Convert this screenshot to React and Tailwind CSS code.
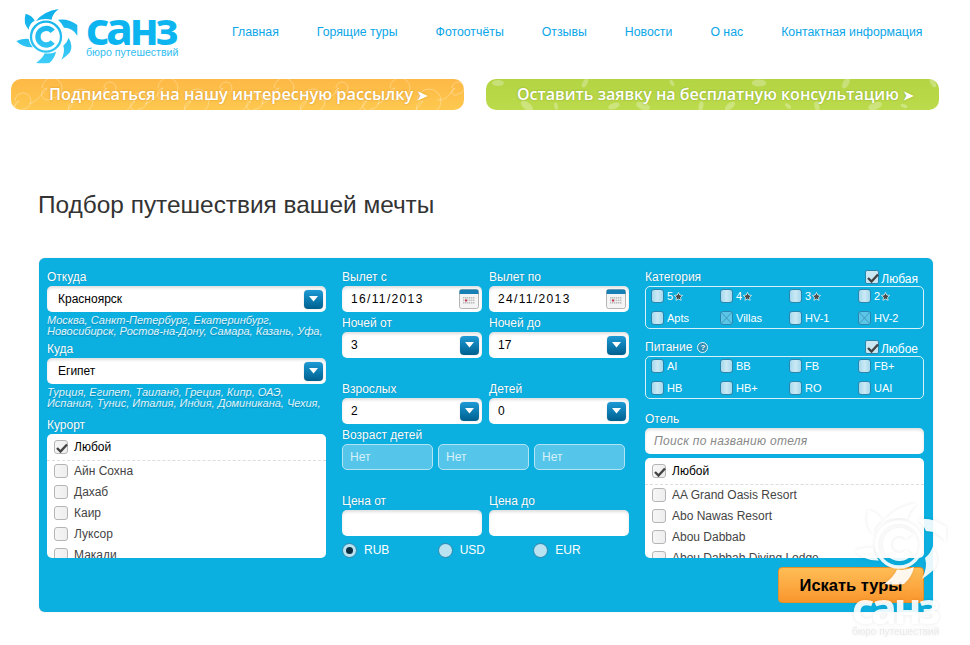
import React from "react";

const nav = ["Главная", "Горящие туры", "Фотоотчёты", "Отзывы", "Новости", "О нас", "Контактная информация"];

function Sun({ white, id, className }) {
  const blade = white ? "#ffffff" : `url(#${id})`;
  return (
    <svg viewBox="0 0 210 186" className={className}>
      <defs>
        <linearGradient id={id} gradientUnits="userSpaceOnUse" x1="0" y1="10" x2="0" y2="176">
          <stop offset="0" stopColor="#0aaeea" />
          <stop offset="1" stopColor="#3fcdf8" />
        </linearGradient>
      </defs>
      <g fill={blade}>
        <path d="M41 26 Q62 32 68 47 Q52 55 50 74 Q32 55 41 26Z" />
        <path d="M72 48 Q96 18 140 12 Q120 28 119 44 Q95 38 72 48Z" />
        <path d="M138 44 Q172 40 196 60 Q196 76 196 92 Q182 68 156 68 Q150 54 138 44Z" />
        <path d="M170 98 Q184 125 174 142 Q166 152 148 164 Q160 140 154 122 Q166 112 170 98Z" />
        <path d="M132 140 Q128 160 112 174 Q92 176 72 174 Q92 160 98 145 Q116 148 132 140Z" />
        <path d="M62 127 Q32 128 13 108 Q34 100 50 102 Q52 116 62 127Z" />
      </g>
      <circle cx="102" cy="95" r="45" fill="none" stroke={blade} strokeWidth="7" />
      <path d="M122 79 A25 25 0 1 0 122 111" fill="none" stroke={blade} strokeWidth="16" />
    </svg>
  );
}

function Swirls({ seed }) {
  const items = [];
  for (let i = 0; i < 16; i++) {
    const x = 12 + i * 29;
    const y = i % 2 ? 9 : 22;
    const r = 6 + ((i + seed) % 4) * 2;
    if (seed === 1) {
      items.push(
        <path
          key={i}
          d={`M${x - r} ${y} a${r} ${r} 0 1 1 ${r} ${r} a${r * 0.6} ${r * 0.6} 0 1 1 ${-r * 0.5} ${-r} q-10 14 -18 ${r + 6}`}
          fill="none"
          stroke="rgba(255,255,255,.3)"
          strokeWidth="1"
        />
      );
    } else {
      items.push(
        <ellipse
          key={i}
          cx={x}
          cy={i % 3 === 0 ? 4 : 27}
          rx={r * 0.6}
          ry={r * 0.3}
          transform={`rotate(${i * 40} ${x} ${i % 3 === 0 ? 4 : 27})`}
          fill="rgba(255,255,255,.28)"
        />
      );
    }
  }
  return (
    <svg viewBox="0 0 453 31" className="absolute inset-0 w-full h-full">
      {items}
    </svg>
  );
}

function Label({ children, className = "" }) {
  return (
    <div className={`h-[14px] text-[12px] leading-[14px] text-white [text-shadow:0_0_1px_rgba(0,60,90,.4)] ${className}`}>
      {children}
    </div>
  );
}

function Arrow() {
  return (
    <span className="w-[19px] h-[19px] rounded-[4px] bg-gradient-to-b from-[#1d9bd6] to-[#00608f] flex items-center justify-center shrink-0 shadow-[0_0_1px_rgba(0,0,0,.4)]">
      <svg width="9" height="6" viewBox="0 0 9 6">
        <path d="M0 0 H9 L4.5 5.5Z" fill="#fff" />
      </svg>
    </span>
  );
}

const box = "h-[26px] bg-white rounded-[5px] shadow-[inset_0_2px_3px_rgba(0,0,0,.13)] flex items-center text-[12px]";

function Select({ value, pl = "pl-[9px]" }) {
  return (
    <div className={`${box} ${pl} pr-[3px] justify-between mt-[2px] text-black`}>
      <span>{value}</span>
      <Arrow />
    </div>
  );
}

function Calendar() {
  return (
    <svg width="20" height="20" viewBox="0 0 20 20" className="shrink-0">
      <rect x="0.5" y="0.5" width="19" height="19" rx="2" fill="#f4f4f4" stroke="#b5b5b5" />
      <path d="M0.5 5 V2.5 a2 2 0 0 1 2-2 h15 a2 2 0 0 1 2 2 V5Z" fill="#1680b5" />
      <g fill="#bdbdbd">
        {[0, 1, 2, 3, 4, 5].map((c) =>
          [0, 1, 2].map((r) => <rect key={`${c}-${r}`} x={4 + c * 2} y={8 + r * 2.5} width="1.4" height="1.6" />)
        )}
      </g>
      <rect x="6" y="10.5" width="2" height="2" fill="#c8344a" />
    </svg>
  );
}

function DateBox({ value }) {
  return (
    <div className={`${box} pl-[9px] pr-[3px] justify-between mt-[2px] text-black tracking-[1.35px]`}>
      <span>{value}</span>
      <Calendar />
    </div>
  );
}

function Hints({ lines }) {
  return (
    <div className="mt-[3px] h-[22px] text-[11px] leading-[10.5px] italic text-[#e2f5fb] [text-shadow:0_1px_1px_rgba(0,70,110,.35)] whitespace-nowrap">
      {lines.map((l) => (
        <div key={l}>{l}</div>
      ))}
    </div>
  );
}

function Check() {
  return (
    <svg width="12" height="10" viewBox="0 0 12 10" className="absolute left-[1px] top-[2px]">
      <path d="M1 5 L4.5 8.5 L11 1.5" fill="none" stroke="#444" strokeWidth="2.4" />
    </svg>
  );
}

function ListBox({ checked }) {
  return (
    <span className="relative w-[14px] h-[14px] shrink-0 rounded-[3px] border border-[#b5b5b5] bg-gradient-to-r from-[#f6f6f6] to-[#eeeeee]">
      {checked && <Check />}
    </span>
  );
}

function Row({ text }) {
  return (
    <div className="h-[21px] flex items-center gap-[6px] pl-[7px] text-[12px] shrink-0 text-[#444]">
      <ListBox />
      <span className="whitespace-nowrap">{text}</span>
    </div>
  );
}

function List({ items, height }) {
  return (
    <div className={`bg-white rounded-[5px] overflow-hidden flex flex-col ${height}`}>
      <div className="h-[27px] shrink-0 mb-[-1px] border-b border-dashed border-[#dddddd] flex items-center gap-[6px] pl-[7px] text-[12px] text-black">
        <ListBox checked />
        <span>Любой</span>
      </div>
      {items.map((t) => (
        <Row key={t} text={t} />
      ))}
    </div>
  );
}

function Opt({ label, star, crossed }) {
  return (
    <div className="flex items-center gap-[3px] text-[11px] text-white">
      <span
        className={`relative w-[13px] h-[14px] rounded-[3px] border border-[#2b86ad] overflow-hidden shrink-0 ${
          crossed ? "bg-[#5cc6e9]" : "bg-gradient-to-r from-[#a5d8ec] via-[#cbe9f4] to-[#a5d8ec]"
        }`}
      >
        {crossed && (
          <svg viewBox="0 0 13 14" className="absolute inset-0 w-full h-full">
            <path d="M0 0 L13 14 M13 0 L0 14" stroke="#3a91b5" strokeWidth="1" />
          </svg>
        )}
      </span>
      <span>{label}</span>
      {star && (
        <svg width="9" height="9" viewBox="0 0 24 24" className="-ml-[2px]">
          <path
            d="M12 1 L15.4 8.2 L23 9.2 L17.4 14.6 L18.9 22.4 L12 18.6 L5.1 22.4 L6.6 14.6 L1 9.2 L8.6 8.2Z"
            fill="#4a4a4a"
            stroke="#dff"
            strokeWidth="2"
          />
        </svg>
      )}
    </div>
  );
}

function OptGrid({ items }) {
  return (
    <div className="h-[43px] mt-[2px] rounded-[5px] border border-[#d5f1fa] pl-[5px] grid grid-cols-[69px_69px_69px_69px] grid-rows-[18px_26px]">
      {items}
    </div>
  );
}

function AnyBox({ text, className = "" }) {
  return (
    <div className={`h-[14px] flex items-start gap-[2px] text-[12px] text-white ${className}`}>
      <span className="relative w-[14px] h-[14px] rounded-[2px] border border-[#2b86ad] bg-[#c9e8f4]">
        <Check />
      </span>
      <span className="mt-[2px] leading-[14px]">{text}</span>
    </div>
  );
}

function Radio({ label, on }) {
  return (
    <div className="w-[96px] flex items-center gap-[7px] text-[12px] text-white">
      <span className="w-[15px] h-[15px] rounded-full border border-[#2a86ab] bg-[#b9e3f1] flex items-center justify-center">
        {on && <span className="w-[7px] h-[7px] rounded-full bg-[#0b2f42]" />}
      </span>
      <span>{label}</span>
    </div>
  );
}

export default function App() {
  return (
    <div
      className="relative w-[970px] h-[645px] overflow-hidden bg-white"
      style={{ fontFamily: '"Liberation Sans", Arial, sans-serif' }}
    >
      <header className="h-[79px] flex items-start">
        <div className="ml-[12px] mt-[5px] flex">
          <Sun id="logoGrad" className="w-[70px] h-[62px] shrink-0" />
          <div className="ml-[4px] w-[94px] mt-[4px] text-[#0db5f0]">
            <div
              className="h-[38px] text-[45px] leading-[38px] font-bold tracking-[-3.5px] whitespace-nowrap"
              style={{ fontFamily: '"Noto Sans", sans-serif' }}
            >
              санз
            </div>
            <div className="text-[10.6px] leading-[11px] text-[#31bdf0] whitespace-nowrap">бюро путешествий</div>
          </div>
        </div>
        <nav className="ml-[52px] mt-[25px] flex gap-[38px] text-[12.3px] leading-[14px] text-[#0aa6e8] whitespace-nowrap">
          {nav.map((n) => (
            <span key={n}>{n}</span>
          ))}
        </nav>
      </header>

      <div className="flex gap-[22px] ml-[11px]">
        <div className="relative w-[453px] h-[31px] rounded-[10px] overflow-hidden bg-gradient-to-b from-[#fdb945] to-[#fec84f]">
          <Swirls seed={1} />
          <div
            className="relative pl-[38px] text-[16.3px] leading-[31px] font-semibold text-white whitespace-nowrap [text-shadow:0_0_2px_rgba(170,100,0,.5)]"
            style={{ fontFamily: '"Open Sans", sans-serif' }}
          >
            Подписаться на нашу интересную рассылку <span className="text-[13px]">➤</span>
          </div>
        </div>
        <div className="relative w-[453px] h-[31px] rounded-[10px] overflow-hidden bg-gradient-to-b from-[#b3d443] to-[#bcdb4c]">
          <Swirls seed={2} />
          <div
            className="relative pl-[31px] text-[16.05px] leading-[31px] font-semibold text-white whitespace-nowrap [text-shadow:0_0_2px_rgba(90,120,0,.5)]"
            style={{ fontFamily: '"Open Sans", sans-serif' }}
          >
            Оставить заявку на бесплатную консультацию <span className="text-[13px]">➤</span>
          </div>
        </div>
      </div>

      <h1 className="ml-[38px] mt-[81px] text-[24.4px] leading-[28px] text-[#333]">Подбор путешествия вашей мечты</h1>

      <main className="ml-[39px] mt-[39px] w-[894px] pl-[8px] pr-[9px] pt-[12px] pb-[9px] rounded-[6px] bg-[#0bafe0] flex gap-[16px] shadow-[0_0_1px_rgba(0,0,0,.3)]">
        <section className="w-[279px]">
          <Label>Откуда</Label>
          <Select value="Красноярск" pl="pl-[11px]" />
          <Hints lines={["Москва, Санкт-Петербург, Екатеринбург,", "Новосибирск, Ростов-на-Дону, Самара, Казань, Уфа,"]} />
          <Label className="mt-[5px]">Куда</Label>
          <Select value="Египет" pl="pl-[11px]" />
          <Hints lines={["Турция, Египет, Таиланд, Греция, Кипр, ОАЭ,", "Испания, Тунис, Италия, Индия, Доминикана, Чехия,"]} />
          <Label className="mt-[9px] mb-[2px]">Курорт</Label>
          <List items={["Айн Сохна", "Дахаб", "Каир", "Луксор", "Макади"]} height="h-[124px]" />
        </section>

        <section className="w-[287px]">
          <div className="grid grid-cols-[140px_140px] gap-x-[7px]">
            <div>
              <Label>Вылет с</Label>
              <DateBox value="16/11/2013" />
            </div>
            <div>
              <Label>Вылет по</Label>
              <DateBox value="24/11/2013" />
            </div>
            <div className="mt-[4px]">
              <Label>Ночей от</Label>
              <Select value="3" />
            </div>
            <div className="mt-[4px]">
              <Label>Ночей до</Label>
              <Select value="17" />
            </div>
            <div className="mt-[24px]">
              <Label>Взрослых</Label>
              <Select value="2" />
            </div>
            <div className="mt-[24px]">
              <Label>Детей</Label>
              <Select value="0" />
            </div>
          </div>
          <Label className="mt-[4px]">Возраст детей</Label>
          <div className="mt-[2px] flex gap-[5px]">
            {[0, 1, 2].map((i) => (
              <div
                key={i}
                className="w-[91px] h-[26px] rounded-[5px] border border-[#b4e4f4] bg-[#55c5e9] pl-[7px] flex items-center text-[12px] text-[#d6f1fa]"
              >
                Нет
              </div>
            ))}
          </div>
          <div className="mt-[24px] grid grid-cols-[140px_140px] gap-x-[7px]">
            <div>
              <Label>Цена от</Label>
              <div className={`${box} mt-[2px]`} />
            </div>
            <div>
              <Label>Цена до</Label>
              <div className={`${box} mt-[2px]`} />
            </div>
          </div>
          <div className="mt-[5px] flex">
            <Radio label="RUB" on />
            <Radio label="USD" />
            <Radio label="EUR" />
          </div>
        </section>

        <section className="w-[279px]">
          <div className="flex justify-between">
            <Label>Категория</Label>
            <AnyBox text="Любая" className="mr-[6px]" />
          </div>
          <OptGrid
            items={
              <>
                <Opt label="5" star />
                <Opt label="4" star />
                <Opt label="3" star />
                <Opt label="2" star />
                <Opt label="Apts" />
                <Opt label="Villas" crossed />
                <Opt label="HV-1" />
                <Opt label="HV-2" crossed />
              </>
            }
          />
          <div className="mt-[11px] flex justify-between">
            <Label className="flex items-center gap-[5px]">
              Питание
              <span className="w-[11px] h-[11px] rounded-full border border-[#e8f8fd] bg-[#2c8fb5] text-[8px] leading-[9px] font-bold text-white text-center">
                ?
              </span>
            </Label>
            <AnyBox text="Любое" className="mr-[6px]" />
          </div>
          <OptGrid
            items={["AI", "BB", "FB", "FB+", "HB", "HB+", "RO", "UAI"].map((t) => (
              <Opt key={t} label={t} />
            ))}
          />
          <Label className="mt-[13px] mb-[2px]">Отель</Label>
          <div className={`${box} pl-[9px] italic text-[#888] tracking-[0.3px]`}>Поиск по названию отеля</div>
          <div className="mt-[4px]">
            <List
              items={["AA Grand Oasis Resort", "Abo Nawas Resort", "Abou Dabbab", "Abou Dabbab Diving Lodge"]}
              height="h-[100px]"
            />
          </div>
          <div className="mt-[9px] flex justify-end">
            <div className="w-[146px] h-[36px] rounded-[4px] border border-[#e5912a] bg-gradient-to-b from-[#ffbd55] to-[#f9962c] flex items-center justify-center text-[16.5px] font-bold text-black">
              Искать туры
            </div>
          </div>
        </section>
      </main>

      <div className="absolute left-[848px] top-[497px] w-[105px] opacity-90 [filter:drop-shadow(0_0_2px_rgba(0,0,0,.09))]">
        <Sun white id="wmGrad" className="w-[105px] h-[93px]" />
        <div
          className="ml-[4px] mt-[3px] text-[43px] leading-[30px] font-bold tracking-[-3.3px] text-white whitespace-nowrap"
          style={{ fontFamily: '"Noto Sans", sans-serif' }}
        >
          санз
        </div>
        <div className="ml-[4px] mt-[3px] text-[10px] leading-[12px] text-[#e8e8e8] whitespace-nowrap">бюро путешествий</div>
      </div>
    </div>
  );
}
